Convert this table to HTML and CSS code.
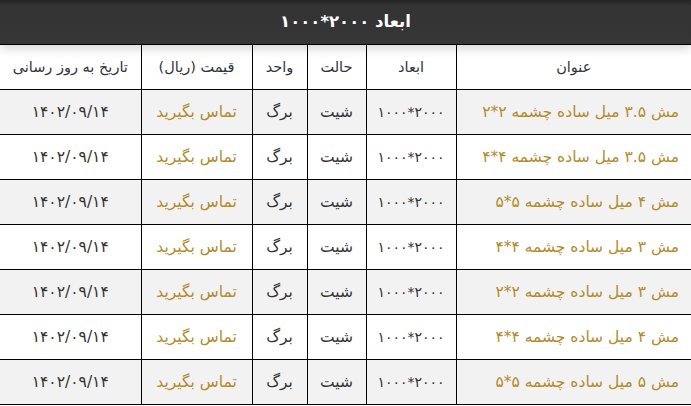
FILE: index.html
```html
<!DOCTYPE html>
<html lang="fa" dir="rtl">
<head>
<meta charset="utf-8">
<title>ابعاد ۲۰۰۰*۱۰۰۰</title>
<link rel="stylesheet" href="styles.css">
</head>
<body>
<div class="panel">
  <div class="panel-title">ابعاد ۲۰۰۰*۱۰۰۰</div>
  <table class="price-table">
    <colgroup>
      <col class="c-title"><col class="c-dim"><col class="c-state"><col class="c-unit"><col class="c-price"><col class="c-date">
    </colgroup>
    <thead>
      <tr><th>عنوان</th><th>ابعاد</th><th>حالت</th><th>واحد</th><th>قیمت (ریال)</th><th>تاریخ به روز رسانی</th></tr>
    </thead>
    <tbody>
      <tr class="alt"><td class="name">مش ۳.۵ میل ساده چشمه ۲*۲</td><td class="dim">۲۰۰۰*۱۰۰۰</td><td>شیت</td><td>برگ</td><td class="price">تماس بگیرید</td><td>۱۴۰۲/۰۹/۱۴</td></tr>
      <tr><td class="name">مش ۳.۵ میل ساده چشمه ۴*۴</td><td class="dim">۲۰۰۰*۱۰۰۰</td><td>شیت</td><td>برگ</td><td class="price">تماس بگیرید</td><td>۱۴۰۲/۰۹/۱۴</td></tr>
      <tr class="alt"><td class="name">مش ۴ میل ساده چشمه ۵*۵</td><td class="dim">۲۰۰۰*۱۰۰۰</td><td>شیت</td><td>برگ</td><td class="price">تماس بگیرید</td><td>۱۴۰۲/۰۹/۱۴</td></tr>
      <tr><td class="name">مش ۳ میل ساده چشمه ۴*۴</td><td class="dim">۲۰۰۰*۱۰۰۰</td><td>شیت</td><td>برگ</td><td class="price">تماس بگیرید</td><td>۱۴۰۲/۰۹/۱۴</td></tr>
      <tr class="alt"><td class="name">مش ۳ میل ساده چشمه ۲*۲</td><td class="dim">۲۰۰۰*۱۰۰۰</td><td>شیت</td><td>برگ</td><td class="price">تماس بگیرید</td><td>۱۴۰۲/۰۹/۱۴</td></tr>
      <tr><td class="name">مش ۴ میل ساده چشمه ۴*۴</td><td class="dim">۲۰۰۰*۱۰۰۰</td><td>شیت</td><td>برگ</td><td class="price">تماس بگیرید</td><td>۱۴۰۲/۰۹/۱۴</td></tr>
      <tr class="alt"><td class="name">مش ۵ میل ساده چشمه ۵*۵</td><td class="dim">۲۰۰۰*۱۰۰۰</td><td>شیت</td><td>برگ</td><td class="price">تماس بگیرید</td><td>۱۴۰۲/۰۹/۱۴</td></tr>
    </tbody>
  </table>
</div>
</body>
</html>
```

FILE: styles.css
```css
html, body {
  margin: 0;
  padding: 0;
  background: #fff;
}
body {
  font-family: "DejaVu Sans", "Noto Sans", sans-serif;
  color: #333;
  width: 691px;
}
.panel {
  width: 691px;
}
.panel-title {
  position: relative;
  z-index: 1;
  height: 44px;
  line-height: 44px;
  background: linear-gradient(#242424 0, #333 6px, #363636 100%);
  color: #fff;
  font-weight: bold;
  font-size: 16.5px;
  text-align: center;
  border-bottom: 1px solid #000;
  box-shadow: 0 3px 10px rgba(0, 0, 0, 0.18);
}
.price-table {
  width: 691px;
  border-collapse: collapse;
  table-layout: fixed;
  font-size: 15.5px;
}
.c-title { width: 235px; }
.c-dim { width: 90px; }
.c-state { width: 59px; }
.c-unit { width: 55px; }
.c-price { width: 111px; }
.c-date { width: 141px; }
.price-table th,
.price-table td {
  height: 44px;
  padding: 0 4px;
  border-bottom: 1px solid #000;
  border-left: 1px solid #000;
  text-align: center;
  vertical-align: middle;
  font-weight: normal;
  white-space: nowrap;
}
.price-table th:last-child,
.price-table td:last-child {
  border-left: none;
}
.price-table th {
  color: #2e3440;
  font-size: 14.5px;
}
.price-table tr.alt td {
  background: #f2f2f2;
}
.price-table td.name {
  text-align: right;
  padding-right: 12px;
  color: #b38b2c;
}
.price-table td.dim {
  font-size: 14px;
}
.price-table td.price {
  color: #b38b2c;
}
```
